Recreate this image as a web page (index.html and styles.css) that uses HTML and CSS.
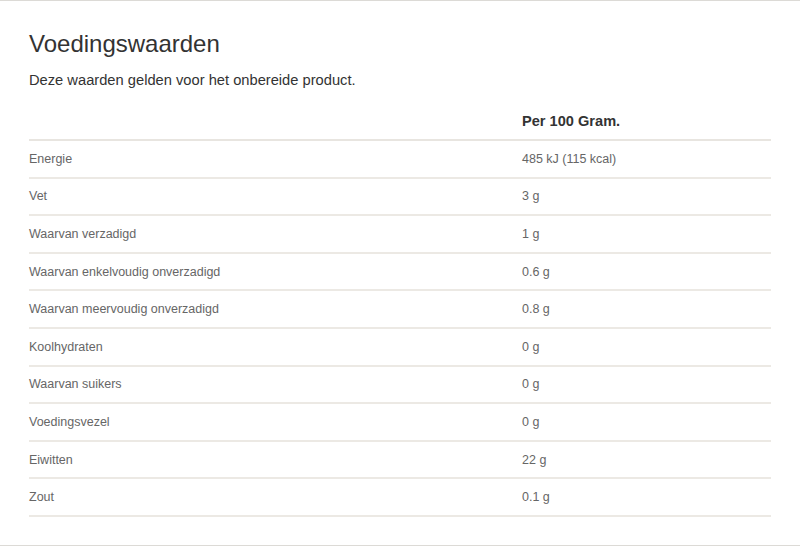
FILE: index.html
```html
<!DOCTYPE html>
<html lang="nl">
<head>
<meta charset="utf-8">
<link rel="stylesheet" href="styles.css">
</head>
<body>
<section class="panel">
  <h2 class="title">Voedingswaarden</h2>
  <p class="intro">Deze waarden gelden voor het onbereide product.</p>
  <table class="nutrition">
    <thead>
      <tr><th class="label"></th><th class="value">Per 100 Gram.</th></tr>
    </thead>
    <tbody>
      <tr><td>Energie</td><td>485 kJ (115 kcal)</td></tr>
      <tr><td>Vet</td><td>3 g</td></tr>
      <tr><td>Waarvan verzadigd</td><td>1 g</td></tr>
      <tr><td>Waarvan enkelvoudig onverzadigd</td><td>0.6 g</td></tr>
      <tr><td>Waarvan meervoudig onverzadigd</td><td>0.8 g</td></tr>
      <tr><td>Koolhydraten</td><td>0 g</td></tr>
      <tr><td>Waarvan suikers</td><td>0 g</td></tr>
      <tr><td>Voedingsvezel</td><td>0 g</td></tr>
      <tr><td>Eiwitten</td><td>22 g</td></tr>
      <tr><td>Zout</td><td>0.1 g</td></tr>
    </tbody>
  </table>
</section>
</body>
</html>
```

FILE: styles.css
```css
html, body {
  margin: 0;
  padding: 0;
  background: #fff;
}
body {
  font-family: "Liberation Sans", Arial, sans-serif;
  color: #333;
}
.panel {
  height: 544px;
  border-top: 1px solid #dcdad6;
  border-bottom: 1px solid #dcdad6;
  padding: 0 29px;
}
.title {
  margin: 29px 0 0;
  font-size: 24px;
  font-weight: normal;
  line-height: 28px;
  color: #333;
}
.intro {
  margin: 12px 0 0;
  font-size: 14.7px;
  line-height: 20px;
  color: #333;
}
.nutrition {
  width: 742px;
  margin-top: 12px;
  border-collapse: collapse;
}
.nutrition th {
  text-align: left;
  font-size: 14.6px;
  font-weight: bold;
  height: 37px;
  padding: 0;
  border-bottom: 2px solid #e8e5e0;
  color: #333;
}
.nutrition th.label {
  width: 493px;
}
.nutrition td {
  font-size: 12.5px;
  color: #666;
  height: 35.6px;
  padding: 0;
  border-bottom: 2px solid #ece9e4;
}
```
